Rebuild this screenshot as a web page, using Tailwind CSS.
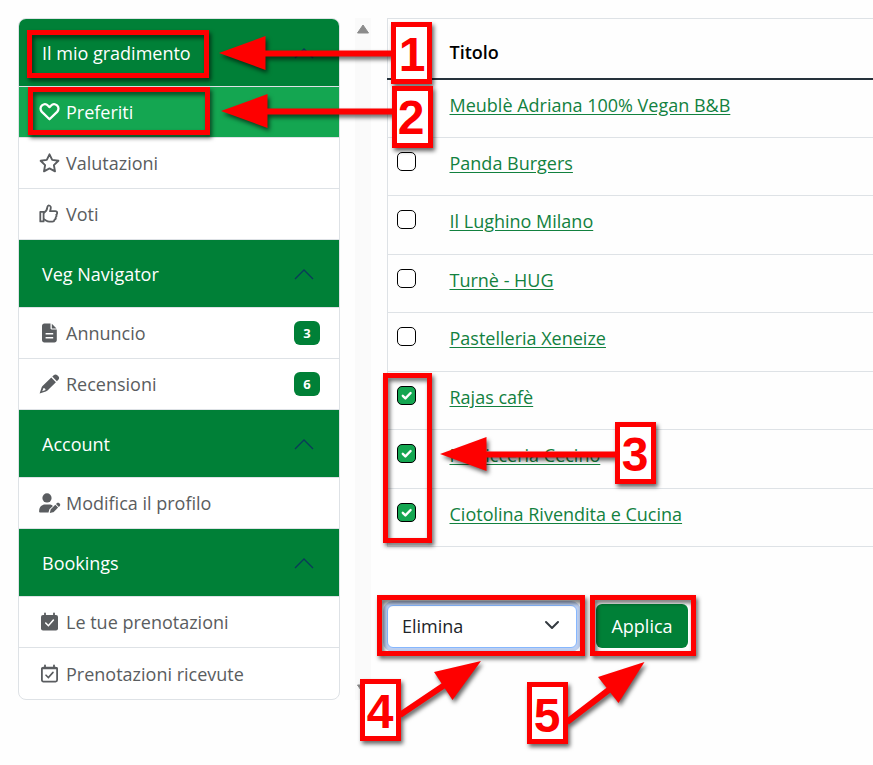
<!DOCTYPE html>
<html lang="it">
<head>
    <meta charset="UTF-8">
    <meta name="viewport" content="width=device-width, initial-scale=1.0">
    <title>Preferiti</title>
    <script src="https://cdn.jsdelivr.net/npm/@tailwindcss/browser@4"></script>
</head>
<body class="relative min-h-screen bg-[#fefefe] font-['Open_Sans',sans-serif] text-[18px] leading-6 text-[#212529]">
    <div class="flex items-start pl-[18px] pt-[18px]">
        <!-- Sidebar -->
        <nav class="w-[322px] shrink-0 rounded-lg border border-[#dee2e6] bg-white overflow-hidden text-[#5a5d60]">
            <button type="button" class="flex w-full h-[68px] items-center justify-between border-b border-[#dee2e6] bg-[#008037] pl-[23px] pr-[25px] text-white">
                Il mio gradimento
                <svg class="w-5 h-5" viewBox="0 0 20 20" fill="none" stroke="#0a3a5a" stroke-width="1.3"><path d="M1 15l9-9 9 9"/></svg>
            </button>
            <a href="#" class="flex h-[51px] items-center gap-[6px] border-b border-[#dee2e6] bg-[#14a651] px-5 text-white">
                <svg class="w-[21px] h-5" viewBox="0 0 21 20" fill="none" stroke="currentColor" stroke-width="2.3"><path d="M10.500 17.300 L2.900 9.900 C1 7.900 1.100 4.900 3 3.300 C5 1.700 7.500 2 9.100 3.700 L10.500 5.100 L11.900 3.700 C13.500 2 16 1.700 18 3.300 C19.900 4.900 20 7.900 18.100 9.900 Z" stroke-linejoin="round"/></svg>
                Preferiti
            </a>
            <a href="#" class="flex h-[51px] items-center gap-[6px] border-b border-[#dee2e6] px-5">
                <svg class="w-[21px] h-5" viewBox="0 0 21 20" fill="none" stroke="currentColor" stroke-width="1.900" stroke-linejoin="round"><path d="M10.500 1.300l2.700 5.600 6.200.9-4.500 4.300 1.100 6.200-5.500-2.900L5 18.300l1.100-6.200-4.500-4.300 6.200-.9z"/></svg>
                Valutazioni
            </a>
            <a href="#" class="flex h-[51px] items-center gap-[6px] border-b border-[#dee2e6] px-5">
                <svg class="w-[21px] h-5" viewBox="0 0 21 20" fill="none" stroke="currentColor" stroke-width="1.800" stroke-linejoin="round"><path d="M1.300 7.800h3.300v9.600H1.300z"/><path d="M4.700 8.900C7 7.700 8.100 5.700 8.300 3.400c.1-1.300 1-2.200 2-1.900 1.500.4 1.800 2 1.300 3.700l-.6 2h5.200c1.300 0 2 .9 2 1.900 0 .8-.4 1.300-1 1.600.6.9.4 2.100-.5 2.600.3 1.100-.2 2.100-1.200 2.400-.1 1.200-.9 1.900-2.200 1.900H10.300c-1.100 0-2-.3-2.900-.9L4.700 15.100"/></svg>
                Voti
            </a>

            <button type="button" class="flex w-full h-[68px] items-center justify-between border-b border-[#dee2e6] bg-[#008037] pl-[23px] pr-[25px] text-white">
                Veg Navigator
                <svg class="w-5 h-5" viewBox="0 0 20 20" fill="none" stroke="#0a3a5a" stroke-width="1.3"><path d="M1 15l9-9 9 9"/></svg>
            </button>
            <a href="#" class="flex h-[51px] items-center gap-[6px] border-b border-[#dee2e6] pl-5 pr-[19px]">
                <svg class="w-[21px] h-5" viewBox="0 0 21 20"><path fill="currentColor" fill-rule="evenodd" d="M5.300 .5H11.500V5.300C11.500 6 12 6.500 12.700 6.500H17.800V17C17.800 18.400 16.800 19.500 15.400 19.500H5.300C4 19.500 3 18.400 3 17V3C3 1.600 4 .5 5.300 .5ZM12.800 .8L17.500 5.400H12.800ZM6.600 10V11.400H14.200V10ZM6.600 14V15.400H14.200V14Z"/></svg>
                <span class="grow">Annuncio</span>
                <span class="flex h-6 w-[26px] items-center justify-center rounded-md bg-[#008037] text-[13px] font-bold text-white">3</span>
            </a>
            <a href="#" class="flex h-[51px] items-center gap-[6px] border-b border-[#dee2e6] pl-5 pr-[19px]">
                <svg class="w-[21px] h-5" viewBox="0 0 21 20"><path fill="currentColor" fill-rule="evenodd" d="M14.700 1.200C15.800 .1 17.200 .1 18.300 1.200L19.300 2.200C20.400 3.300 20.400 4.700 19.300 5.800L17.900 7.200 13.300 2.600ZM12.300 3.600L16.900 8.200 8.500 16.600C8 17.100 7.400 17.400 6.800 17.600L.6 19.500 2.600 13.600C2.800 13 3.100 12.500 3.500 12.100ZM4.500 14L3.200 17.300 6.600 16 6 14.500Z"/></svg>
                <span class="grow">Recensioni</span>
                <span class="flex h-6 w-[26px] items-center justify-center rounded-md bg-[#008037] text-[13px] font-bold text-white">6</span>
            </a>

            <button type="button" class="flex w-full h-[68px] items-center justify-between border-b border-[#dee2e6] bg-[#008037] pl-[23px] pr-[25px] text-white">
                Account
                <svg class="w-5 h-5" viewBox="0 0 20 20" fill="none" stroke="#0a3a5a" stroke-width="1.3"><path d="M1 15l9-9 9 9"/></svg>
            </button>
            <a href="#" class="flex h-[51px] items-center gap-[6px] border-b border-[#dee2e6] px-5">
                <svg class="w-[21px] h-5 overflow-visible" viewBox="0 0 21 20" fill="currentColor"><circle cx="8" cy="4.900" r="4.600"/><path d="M6 11.500h4c1.600 0 2.800.5 3.900 1.400l-3.200 3.200c-.3.300-.5.700-.6 1.100L9.500 19.400H1C.4 19.400.1 19 .1 18.400.1 14.400 2.500 11.500 6 11.500z"/><path d="M18 10.100c.6-.6 1.500-.6 2.100 0l.7.700c.6.600.6 1.500 0 2.100l-1 1-2.800-2.800zM16.300 11.800l2.800 2.800-4.400 4.300c-.2.200-.4.300-.7.400l-3.200.7.800-3.200c.1-.2.200-.5.400-.7z"/></svg>
                Modifica il profilo
            </a>

            <button type="button" class="flex w-full h-[68px] items-center justify-between border-b border-[#dee2e6] bg-[#008037] pl-[23px] pr-[25px] text-white">
                Bookings
                <svg class="w-5 h-5" viewBox="0 0 20 20" fill="none" stroke="#0a3a5a" stroke-width="1.3"><path d="M1 15l9-9 9 9"/></svg>
            </button>
            <a href="#" class="flex h-[51px] items-center gap-[6px] border-b border-[#dee2e6] px-5">
                <svg class="w-[21px] h-5" viewBox="0 0 21 20" fill="none" stroke-linecap="round"><rect x="2" y="3" width="17" height="15.500" rx="2" fill="currentColor"/><path d="M6 1.300V4M15 1.300V4" stroke="currentColor" stroke-width="1.800"/><path d="M6.700 11l2.700 2.700 5-5.700" stroke="#fff" stroke-width="1.600"/></svg>
                Le tue prenotazioni
            </a>
            <a href="#" class="flex h-[51px] items-center gap-[6px] px-5">
                <svg class="w-[21px] h-5" viewBox="0 0 21 20" fill="none" stroke="currentColor" stroke-linecap="round"><rect x="2.900" y="3.600" width="15.200" height="14" rx="1.500" stroke-width="1.800"/><path d="M6 1.300V4M15 1.300V4M3 4.400H18" stroke-width="1.800"/><path d="M7 11.200l2.400 2.400 4.600-5.200" stroke-width="1.600"/></svg>
                Prenotazioni ricevute
            </a>
        </nav>

        <!-- Scroll gutter -->
        <div class="ml-[15px] flex w-4 shrink-0 flex-col items-center justify-between self-stretch bg-[#fafafa] py-[6px]">
            <svg class="w-3 h-[10px]" viewBox="0 0 12 10" fill="#8b8b8b"><path d="M6 1L11.500 9H.5z" stroke="#8b8b8b" stroke-linejoin="round"/></svg>
            <svg class="w-3 h-[10px]" viewBox="0 0 12 10" fill="#8b8b8b"><path d="M6 9L11.500 1H.5z" stroke="#8b8b8b" stroke-linejoin="round"/></svg>
        </div>

        <!-- Favourites -->
        <main class="ml-4 grow">
            <table class="w-full border-collapse border-l border-t border-[#dee2e6] text-left">
                <thead>
                    <tr class="h-[60px] border-b-2 border-[#26323c] text-black">
                        <th class="w-[62px]" aria-label="Seleziona"></th>
                        <th class="pt-2 font-semibold">Titolo</th>
                    </tr>
                </thead>
                <tbody id="favorites" class="text-[#12813f]"></tbody>
            </table>

            <form class="mt-[57px] flex items-center gap-[19px]">
                <div class="relative">
                    <select aria-label="Azione" class="block h-[43px] w-[190px] appearance-none rounded-md border border-[#86b7fe] bg-white pl-[14px] text-[#212529] ring-4 ring-[#bdcff0] outline-none">
                        <option>Elimina</option>
                    </select>
                    <svg class="pointer-events-none absolute right-[17px] top-3 w-4 h-4" viewBox="0 0 16 16" fill="none" stroke="#343a40" stroke-width="2" stroke-linecap="round" stroke-linejoin="round"><path d="M2 5l6 6 6-6"/></svg>
                </div>
                <button type="submit" class="h-11 w-[92px] rounded-md bg-[#008037] text-white">Applica</button>
            </form>
        </main>
    </div>

    <!-- Numbered steps drawn over the page -->
    <svg class="pointer-events-none absolute left-0 top-0 drop-shadow-[2px_3px_2px_rgba(0,0,0,0.6)]" width="873" height="765" viewBox="0 0 873 765" fill="none" stroke="#fe0000" stroke-width="5">
        <rect x="29.500" y="32.500" width="177" height="43"/>
        <rect x="30.500" y="89.500" width="177" height="43"/>
        <rect x="385.500" y="375.500" width="44" height="165"/>
        <rect x="379.500" y="597.500" width="203" height="56"/>
        <rect x="592.500" y="597.500" width="101" height="56"/>
        <g stroke-width="6">
            <path d="M260 53.500H394M262 111.500H395M480 454.500H618M400 715L446 684M567 722L610 689"/>
        </g>
        <g fill="#fe0000" stroke="none">
            <path d="M219 53L265.500 36V70z"/>
            <path d="M221 111L267.500 94V128z"/>
            <path d="M440 454L486.500 437V471z"/>
            <path d="M481 661L434 672L452.500 700z"/>
            <path d="M644.500 662L598 677L618.500 703z"/>
        </g>
        <g fill="#fff">
            <rect x="393.500" y="24.500" width="36" height="57"/>
            <rect x="394.500" y="88.500" width="36" height="57"/>
            <rect x="617.500" y="424.500" width="36" height="57"/>
            <rect x="362.500" y="681.500" width="36" height="57"/>
            <rect x="529.500" y="684.500" width="36" height="57"/>
        </g>
    </svg>
    <svg class="pointer-events-none absolute left-0 top-0 font-['Liberation_Sans',Arial,sans-serif] text-[48px] font-bold" width="873" height="765" viewBox="0 0 873 765" fill="#fe0000" text-anchor="middle">
        <text x="412" y="71">1</text>
        <text x="411" y="134">2</text>
        <text x="635" y="471">3</text>
        <text x="380" y="728">4</text>
        <text x="547" y="732">5</text>
    </svg>

    <script>
        const favorites = [
            { title: 'Meublè Adriana 100% Vegan B&amp;B', checked: false },
            { title: 'Panda Burgers', checked: false },
            { title: 'Il Lughino Milano', checked: false },
            { title: 'Turnè - HUG', checked: false },
            { title: 'Pastelleria Xeneize', checked: false },
            { title: 'Rajas cafè', checked: true },
            { title: 'Pasticceria Cecino', checked: true },
            { title: 'Ciotolina Rivendita e Cucina', checked: true }
        ];

        document.getElementById('favorites').innerHTML = favorites.map((item) => `
            <tr class="border-b border-[#dee2e6] align-top odd:h-[59px] even:h-[58px]">
                <td class="pl-[9px] pt-[14px]">
                    <label class="grid w-[19px]">
                        <input type="checkbox" aria-label="${item.title}" class="peer col-start-1 row-start-1 size-[19px] appearance-none rounded-[5px] border border-black bg-white checked:bg-[#14a651]" ${item.checked ? 'checked' : ''}>
                        <svg class="pointer-events-none invisible peer-checked:visible col-start-1 row-start-1 size-[19px]" viewBox="0 0 19 19" fill="none" stroke="#fff" stroke-width="2.4" stroke-linecap="round" stroke-linejoin="round"><path d="M5.800 9.800l2.600 2.600 5.200-5.400"/></svg>
                    </label>
                </td>
                <td class="pt-[13px]"><a href="#" class="underline underline-offset-2">${item.title}</a></td>
            </tr>
        `).join('');
    </script>
</body>
</html>
